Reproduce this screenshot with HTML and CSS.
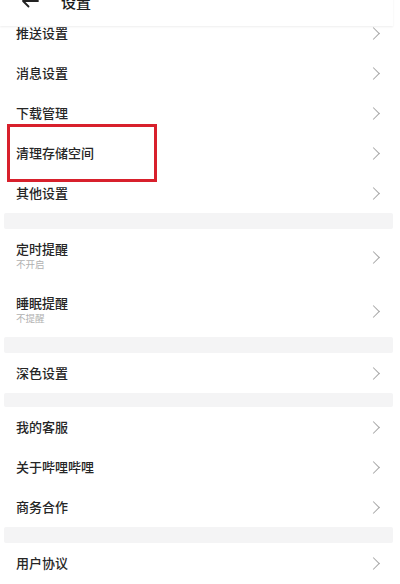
FILE: index.html
```html
<!DOCTYPE html>
<html lang="zh-CN">
<head>
<meta charset="utf-8">
<title>设置</title>
<link rel="stylesheet" href="styles.css">
</head>
<body>
<div class="page">
  <header class="topbar">
    <svg class="back" width="18" height="14" viewBox="0 0 18 14"><path d="M17 7H2M7.5 1.5L2 7l5.5 5.5" fill="none" stroke="#222" stroke-width="1.8" stroke-linecap="round" stroke-linejoin="round"/></svg>
    <span class="title">设置</span>
  </header>
  <main class="list">
    <section class="group">
      <div class="row"><span class="label">推送设置</span><i class="chev"></i></div>
      <div class="row"><span class="label">消息设置</span><i class="chev"></i></div>
      <div class="row"><span class="label">下载管理</span><i class="chev"></i></div>
      <div class="row"><span class="label">清理存储空间</span><i class="chev"></i><span class="mark"></span></div>
      <div class="row"><span class="label">其他设置</span><i class="chev"></i></div>
    </section>
    <div class="band"></div>
    <section class="group">
      <div class="row tall"><span class="stack"><span class="label">定时提醒</span><span class="sub">不开启</span></span><i class="chev"></i></div>
      <div class="row tall"><span class="stack"><span class="label">睡眠提醒</span><span class="sub">不提醒</span></span><i class="chev"></i></div>
    </section>
    <div class="band"></div>
    <section class="group">
      <div class="row"><span class="label">深色设置</span><i class="chev"></i></div>
    </section>
    <div class="band short"></div>
    <section class="group">
      <div class="row"><span class="label">我的客服</span><i class="chev"></i></div>
      <div class="row"><span class="label">关于哔哩哔哩</span><i class="chev"></i></div>
      <div class="row"><span class="label">商务合作</span><i class="chev"></i></div>
    </section>
    <div class="band"></div>
    <section class="group">
      <div class="row"><span class="label">用户协议</span><i class="chev"></i></div>
    </section>
  </main>
</div>
</body>
</html>
```
FILE: styles.css
```css
html, body {
  margin: 0;
  padding: 0;
  background: #ffffff;
}
body {
  font-family: "Noto Sans CJK SC", "Noto Sans", sans-serif;
  color: #222;
  width: 400px;
  height: 584px;
  overflow: hidden;
}
.page {
  position: relative;
  width: 400px;
  height: 584px;
  overflow: hidden;
  background: #fff;
}
.topbar {
  position: absolute;
  left: 0;
  top: -24px;
  width: 393px;
  height: 50px;
  background: #fff;
  display: flex;
  align-items: center;
  box-shadow: 0 1px 2px rgba(0, 0, 0, 0.07);
  z-index: 2;
}
.back {
  margin-left: 21px;
}
.title {
  margin-left: 22px;
  font-size: 15px;
  font-weight: 500;
  color: #1c1c1c;
}
.list {
  padding-top: 13px;
  display: flex;
  flex-direction: column;
}
.group {
  display: flex;
  flex-direction: column;
  background: #fff;
}
.row {
  position: relative;
  height: 40px;
  display: flex;
  align-items: center;
  justify-content: space-between;
  padding: 0 22px 0 16px;
}
.row.tall {
  height: 54px;
}
.label {
  font-size: 13px;
  line-height: 16px;
  font-weight: 500;
  color: #262626;
}
.stack {
  display: flex;
  flex-direction: column;
  margin-top: -2px;
}
.sub {
  font-size: 9.5px;
  line-height: 12px;
  color: #b0b0b0;
  margin-top: 1px;
}
.chev {
  width: 8px;
  height: 8px;
  border-right: 1.5px solid #a6a6a6;
  border-top: 1.5px solid #a6a6a6;
  transform: rotate(45deg);
}
.row.tall .chev {
  margin-top: 2px;
}
.band {
  height: 16px;
  margin: 0 7px 0 4px;
  background: #f4f4f5;
  border-radius: 2px;
}
.band.short {
  height: 14px;
}
.mark {
  position: absolute;
  left: 7px;
  top: -9px;
  width: 144px;
  height: 52px;
  border: 3.5px solid #d8202c;
  pointer-events: none;
}
```
